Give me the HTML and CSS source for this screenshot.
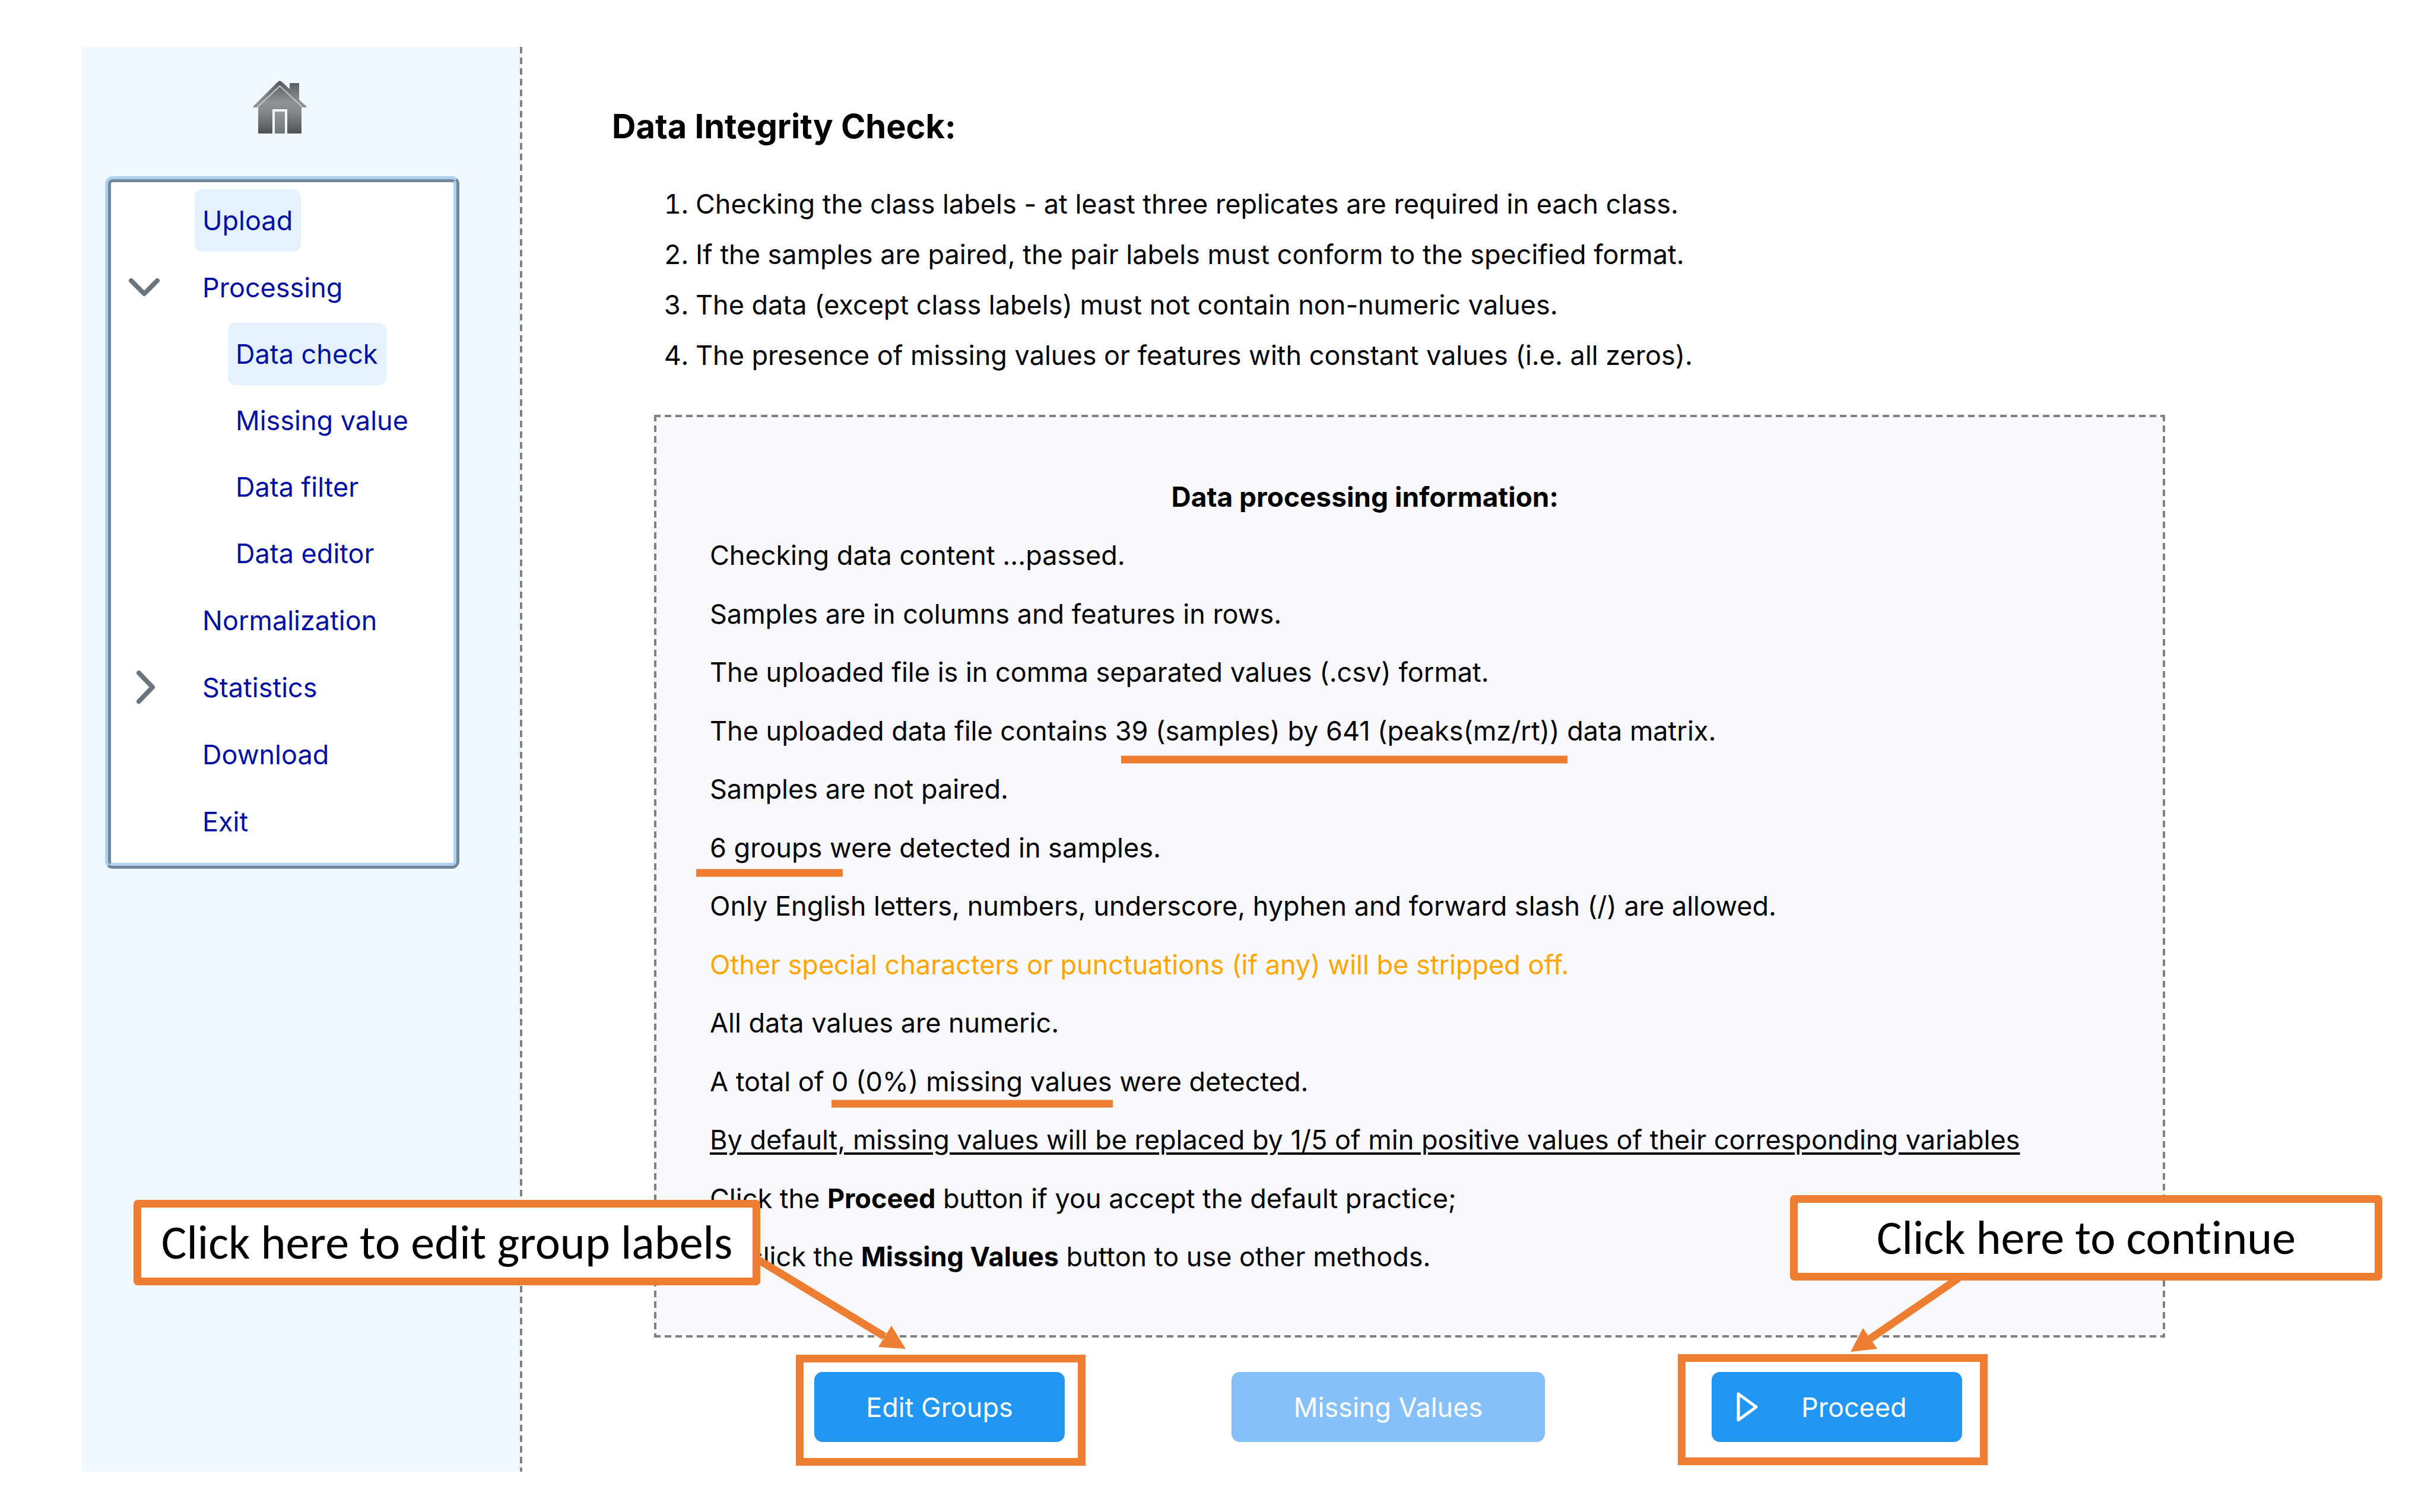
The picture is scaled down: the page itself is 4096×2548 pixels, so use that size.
FILE: index.html
```html
<!DOCTYPE html>
<html lang="en">
<head>
<meta charset="utf-8">
<title>Data Integrity Check</title>
<link rel="stylesheet" href="styles.css">
</head>
<body>
<div class="page">
  <aside class="sidebar">
    <a class="home" href="#" aria-label="Home">
      <svg width="98" height="90" viewBox="0 0 98 90">
        <defs>
          <linearGradient id="wall" x1="0" y1="0" x2="0" y2="1">
            <stop offset="0" stop-color="#55565a"/>
            <stop offset="0.4" stop-color="#8f9294"/>
            <stop offset="0.6" stop-color="#85888a"/>
            <stop offset="1" stop-color="#505155"/>
          </linearGradient>
          <linearGradient id="door" x1="0" y1="0" x2="0" y2="1">
            <stop offset="0" stop-color="#96999b"/>
            <stop offset="1" stop-color="#737678"/>
          </linearGradient>
        </defs>
        <path fill="url(#wall)" d="M44.500 0 48 2 61 14V4H77V32L89 43V45H81V89H8V45H0V43L41 2Z"/>
        <path fill="none" stroke="#c4c8cb" stroke-width="2" d="M6 45 44.500 9 83 45"/>
        <path fill="#f0f8ff" d="M32 48H57V90H32Z"/>
        <path fill="url(#door)" d="M36 52H53V89H36Z"/>
      </svg>
    </a>
    <nav class="menu" aria-label="Steps">
      <div class="menu-inner">
        <ul class="tree">
          <li><div class="row"><a class="node visited" href="#">Upload</a></div></li>
          <li>
            <div class="row">
              <button class="toggle" type="button" aria-label="Collapse Processing" aria-expanded="true">
                <svg width="56" height="56" viewBox="0 0 56 56"><path d="M6 17 28 39 50 17"/></svg>
              </button>
              <a class="node" href="#">Processing</a>
            </div>
            <ul class="tree branch">
              <li><div class="row"><a class="node visited" href="#" aria-current="page">Data check</a></div></li>
              <li><div class="row"><a class="node" href="#">Missing value</a></div></li>
              <li><div class="row"><a class="node" href="#">Data filter</a></div></li>
              <li><div class="row"><a class="node" href="#">Data editor</a></div></li>
            </ul>
          </li>
          <li><div class="row"><a class="node" href="#">Normalization</a></div></li>
          <li>
            <div class="row">
              <button class="toggle" type="button" aria-label="Expand Statistics" aria-expanded="false">
                <svg width="56" height="56" viewBox="0 0 56 56"><path d="M19 4 42 28 19 52"/></svg>
              </button>
              <a class="node" href="#">Statistics</a>
            </div>
          </li>
          <li><div class="row"><a class="node" href="#">Download</a></div></li>
          <li><div class="row"><a class="node" href="#">Exit</a></div></li>
        </ul>
      </div>
    </nav>
  </aside>

  <main class="content">
    <h1 class="title">Data Integrity Check:</h1>
    <ol class="checks">
      <li>Checking the class labels - at least three replicates are required in each class.</li>
      <li>If the samples are paired, the pair labels must conform to the specified format.</li>
      <li>The data (except class labels) must not contain non-numeric values.</li>
      <li>The presence of missing values or features with constant values (i.e. all zeros).</li>
    </ol>
    <section class="panel">
      <div class="report">
        <h2 class="report-title">Data processing information:</h2>
        <p>Checking data content ...passed.</p>
        <p>Samples are in columns and features in rows.</p>
        <p>The uploaded file is in comma separated values (.csv) format.</p>
        <p>The uploaded data file contains 39 (samples) by 641 (peaks(mz/rt)) data matrix.</p>
        <p>Samples are not paired.</p>
        <p>6 groups were detected in samples.</p>
        <p>Only English letters, numbers, underscore, hyphen and forward slash (/) are allowed.</p>
        <p class="warn">Other special characters or punctuations (if any) will be stripped off.</p>
        <p>All data values are numeric.</p>
        <p>A total of 0 (0%) missing values were detected.</p>
        <p><u>By default, missing values will be replaced by 1/5 of min positive values of their corresponding variables</u></p>
        <p>Click the <b>Proceed</b> button if you accept the default practice;</p>
        <p>Or click the <b>Missing Values</b> button to use other methods.</p>
      </div>
    </section>
    <div class="actions">
      <button class="btn" type="button">Edit Groups</button>
      <button class="btn wide" type="button" disabled>Missing Values</button>
      <button class="btn with-icon" type="button">
        <svg width="38" height="54" viewBox="0 0 38 54"><path d="M4 5V49L34 27Z"/></svg>
        <span>Proceed</span>
      </button>
    </div>
  </main>

  <div class="marks">
    <svg class="strokes" width="4096" height="2548" viewBox="0 0 4096 2548">
      <path d="M1889 1280H2641M1173 1471H1420M1401 1860H1875"/>
      <path d="M1276 2122 1490 2252M3300 2154 3148 2258"/>
      <path class="head" d="M1526 2273 1502 2234 1480 2270ZM3118 2278 3139 2238 3163 2273Z"/>
    </svg>
    <div class="frame frame-edit"></div>
    <div class="frame frame-proceed"></div>
    <div class="callout callout-edit">Click here to edit group labels</div>
    <div class="callout callout-proceed">Click here to continue</div>
  </div>
</div>
</body>
</html>
```
FILE: styles.css
```css
* {
  box-sizing: border-box;
}

body {
  margin: 0;
  background: #fff;
  color: #000;
  font-family: Inter, "Liberation Sans", sans-serif;
  font-size: 45px;
}

h1, h2, p, ul, ol {
  margin: 0;
  padding: 0;
}

.page {
  position: relative;
  display: flex;
  align-items: flex-start;
  padding: 79px 0 68px 138px;
}

/* sidebar */

.sidebar {
  flex: 0 0 742px;
  align-self: stretch;
  min-height: 2401px;
  padding: 57px 106px 0 39px;
  background:
    linear-gradient(#808080 11px, transparent 0) right top / 4px 18px repeat-y,
    #f0f8ff;
}

.home {
  display: flex;
  justify-content: center;
  margin-bottom: 71px;
}

/* two nested borders make the raised edge */
.menu {
  border: 5px solid;
  border-color: #aed1f0 #6f869b #6f869b #aed1f0;
  border-radius: 13px;
}

.menu-inner {
  padding: 12px 0 17px;
  border: 5px solid;
  border-color: #6f869b #aed1f0 #aed1f0 #6f869b;
  border-radius: 8px;
  background: #fff;
}

.tree {
  display: grid;
  gap: 8px;
  padding-left: 141px;
  list-style: none;
}

.branch {
  gap: 7px;
  margin-top: 7px;
  padding-left: 56px;
}

.row {
  position: relative;
  display: flex;
  height: 105px;
}

.toggle {
  position: absolute;
  left: -113px;
  top: 24px;
  width: 56px;
  height: 56px;
  padding: 0;
  border: 0;
  background: none;
}

.toggle svg {
  display: block;
  fill: none;
  stroke: #6c757d;
  stroke-width: 8px;
  stroke-linecap: round;
  stroke-linejoin: round;
}

.node {
  padding: 0 14px 0 13px;
  border-radius: 13px;
  color: #0010a0;
  line-height: 105px;
  text-decoration: none;
  white-space: nowrap;
}

.visited {
  background: #e3f2fd;
}

/* main column */

.content {
  flex: 1;
  padding: 94px 448px 0 151px;
}

.title {
  font-size: 56px;
  line-height: 80px;
}

.checks {
  margin-top: 48px;
  padding-left: 141px;
  line-height: 85px;
}

.panel {
  margin: 58px 0 0 71px;
  padding: 89px 95px 87px 94px;
  background:
    linear-gradient(90deg, #808080 11px, transparent 0) left top / 18px 4px repeat-x,
    linear-gradient(90deg, #808080 11px, transparent 0) left bottom / 18px 4px repeat-x,
    linear-gradient(#808080 11px, transparent 0) left top / 4px 18px repeat-y,
    linear-gradient(#808080 11px, transparent 0) right top / 4px 18px repeat-y,
    #f9f9fc;
}

.report {
  display: grid;
  grid-auto-rows: 1fr;
  align-items: center;
  width: max-content;
  min-height: 1379px;
}

.report-title {
  font-size: 46px;
  text-align: center;
}

.report u {
  text-decoration-thickness: 4px;
  text-underline-offset: 5px;
}

.warn {
  color: #ffa500;
}

.actions {
  display: flex;
  gap: 281px;
  margin: 58px 0 0 341px;
}

.btn {
  display: flex;
  align-items: center;
  justify-content: center;
  width: 422px;
  height: 118px;
  padding: 0;
  border: 0;
  border-radius: 14px;
  background: #2196f3;
  color: #fff;
  font: inherit;
}

.wide {
  width: 528px;
}

.btn:disabled {
  background: #85c0f9;
}

.with-icon {
  justify-content: flex-start;
  padding-left: 41px;
  gap: 72px;
}

.with-icon svg {
  fill: none;
  stroke: #fff;
  stroke-width: 5px;
  stroke-linejoin: round;
}

/* annotations laid over the page */

.strokes {
  position: absolute;
  left: 0;
  top: 0;
  fill: none;
  stroke: #ed7d31;
  stroke-width: 13px;
  pointer-events: none;
}

.head {
  fill: #ed7d31;
  stroke: none;
}

.frame {
  position: absolute;
  border: 13px solid #ed7d31;
  pointer-events: none;
}

.frame-edit {
  left: 1341px;
  top: 2283px;
  width: 488px;
  height: 187px;
}

.frame-proceed {
  left: 2827px;
  top: 2282px;
  width: 522px;
  height: 187px;
}

.callout {
  position: absolute;
  height: 144px;
  border: 13px solid #ed7d31;
  border-radius: 7px;
  background: #fff;
  font-family: Calibri, Carlito, "Open Sans", sans-serif;
  font-size: 80px;
  font-variant-ligatures: none;
  line-height: 118px;
  text-align: center;
  white-space: nowrap;
}

.callout-edit {
  left: 225px;
  top: 2022px;
  width: 1056px;
}

.callout-proceed {
  left: 3016px;
  top: 2014px;
  width: 998px;
}
```
